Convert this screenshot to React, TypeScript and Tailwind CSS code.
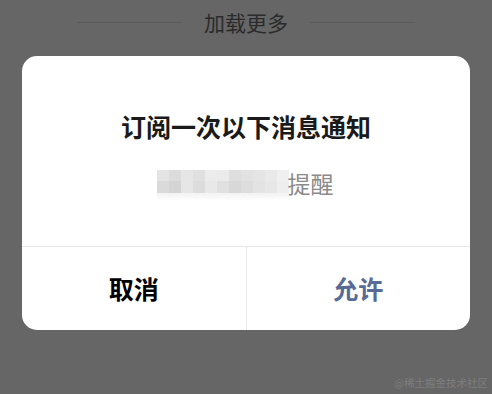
import React from 'react';

const cjk = "font-['Noto_Sans_CJK_SC','Noto_Sans',sans-serif]";

// pixelated placeholder for the masked template name
const mosaicTop = [
  'bg-[#e4e4e4]', 'bg-[#dcdcdc]', 'bg-[#e6e6e6]', 'bg-[#e0e0e0]', 'bg-[#ececec]',
  'bg-[#ebebeb]', 'bg-[#dedede]', 'bg-[#e2e2e2]', 'bg-[#e5e5e5]', 'bg-[#e9e9e9]', 'bg-[#f0f0f0]',
];
const mosaicBottom = [
  'bg-[#dadada]', 'bg-[#d4d4d4]', 'bg-[#e6e6e6]', 'bg-[#dcdcdc]', 'bg-[#e8e8e8]',
  'bg-[#e0e0e0]', 'bg-[#d8d8d8]', 'bg-[#dddddd]', 'bg-[#e3e3e3]', 'bg-[#e7e7e7]', 'bg-[#eeeeee]',
];

function Mosaic() {
  return (
    <div className="flex flex-col">
      <div className="flex">
        {mosaicTop.map((c, i) => (
          <div key={i} className={`h-[11px] w-[12px] ${c}`} />
        ))}
      </div>
      <div className="flex">
        {mosaicBottom.map((c, i) => (
          <div key={i} className={`h-[12px] w-[12px] ${c}`} />
        ))}
      </div>
      <div className="h-[8px] w-[132px] bg-gradient-to-b from-[#f2f2f2] to-white" />
    </div>
  );
}

export default function App() {
  return (
    <div className={`relative h-[394px] w-[492px] overflow-hidden bg-[#666666] ${cjk}`}>
      {/* load more header */}
      <div className="flex h-[44px] items-center justify-center gap-[22px]">
        <div className="h-px w-[105px] bg-[#5a5a5a]" />
        <span className="text-[21px] leading-[28px] text-[#2b2b2b]">加载更多</span>
        <div className="h-px w-[105px] bg-[#5a5a5a]" />
      </div>

      {/* subscribe dialog */}
      <div className="mx-[22px] mt-[12px] rounded-[15px] bg-white">
        <div className="flex flex-col items-center pt-[54px] pb-[47px]">
          <h2 className="text-[25px] font-bold leading-[32px] text-[#1a1a1a]">订阅一次以下消息通知</h2>
          <div className="mt-[25px] flex h-[32px] items-center pr-[2px]">
            <div className="mt-[4px]">
              <Mosaic />
            </div>
            <span className="-ml-[1px] text-[23px] leading-[32px] text-[#8a8a8a]">提醒</span>
          </div>
        </div>
        <div className="flex h-[84px] border-t border-[#e8e8e8]">
          <button className="flex flex-1 items-center justify-center border-r border-[#e8e8e8] text-[25px] font-bold text-black">
            取消
          </button>
          <button className="flex flex-1 items-center justify-center text-[25px] font-bold text-[#576b95]">
            允许
          </button>
        </div>
      </div>

      <span className="absolute right-[4px] bottom-[4px] text-[10.5px] leading-[14px] text-[#7e7e7e]">
        @稀土掘金技术社区
      </span>
    </div>
  );
}
